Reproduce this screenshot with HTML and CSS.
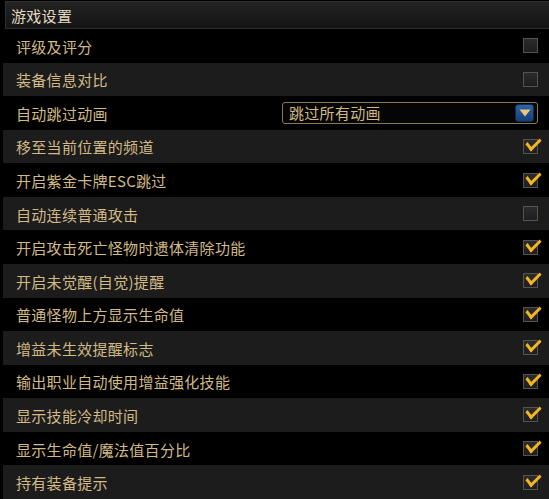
FILE: index.html
```html
<!DOCTYPE html>
<html lang="zh-CN">
<head>
<meta charset="utf-8">
<title>游戏设置</title>
<link rel="stylesheet" href="styles.css">
</head>
<body>
<div class="panel">
  <div class="header"><span class="title">游戏设置</span></div>
  <div class="list">
    <div class="row"><span class="label">评级及评分</span><span class="box"></span></div>
    <div class="row alt"><span class="label">装备信息对比</span><span class="box"></span></div>
    <div class="row"><span class="label">自动跳过动画</span>
      <div class="select"><span class="select-text">跳过所有动画</span><span class="select-btn"><svg width="12" height="8" viewBox="0 0 12 8"><path d="M0.5 0.5 H11.5 L6 7.5 Z" fill="#f2c679"/></svg></span></div>
    </div>
    <div class="row alt"><span class="label">移至当前位置的频道</span><span class="box on"></span></div>
    <div class="row"><span class="label">开启紫金卡牌ESC跳过</span><span class="box on"></span></div>
    <div class="row alt"><span class="label">自动连续普通攻击</span><span class="box"></span></div>
    <div class="row"><span class="label">开启攻击死亡怪物时遗体清除功能</span><span class="box on"></span></div>
    <div class="row alt"><span class="label">开启未觉醒(自觉)提醒</span><span class="box on"></span></div>
    <div class="row"><span class="label">普通怪物上方显示生命值</span><span class="box on"></span></div>
    <div class="row alt"><span class="label">增益未生效提醒标志</span><span class="box on"></span></div>
    <div class="row"><span class="label">输出职业自动使用增益强化技能</span><span class="box on"></span></div>
    <div class="row alt"><span class="label">显示技能冷却时间</span><span class="box on"></span></div>
    <div class="row"><span class="label">显示生命值/魔法值百分比</span><span class="box on"></span></div>
    <div class="row alt"><span class="label">持有装备提示</span><span class="box on"></span></div>
  </div>
</div>
</body>
</html>
```

FILE: styles.css
```css
html, body {
  margin: 0;
  padding: 0;
  background: #000;
}
.panel {
  width: 549px;
  height: 499px;
  overflow: hidden;
  font-family: "Noto Sans CJK SC", "Noto Sans", sans-serif;
  font-size: 15px;
  letter-spacing: 0.3px;
  color: #d2ba86;
  display: flex;
  flex-direction: column;
}
.header {
  margin: 1px 0 0 5px;
  height: 26px;
  border: 1px solid #2f2f2f;
  border-right: none;
  background: linear-gradient(#232323, #141414);
  display: flex;
  align-items: center;
  padding-left: 5px;
}
.title {
  color: #e3dac3;
  line-height: 1;
}
.list {
  display: flex;
  flex-direction: column;
}
.row {
  height: 33.57px;
  display: flex;
  align-items: center;
  justify-content: space-between;
  padding: 0 11px 0 16px;
  background: #000;
}
.row.alt {
  background: #1c1c1c;
  margin-left: 3px;
  padding-left: 13px;
}
.label {
  line-height: 1;
  padding-top: 1px;
}
.box {
  width: 13px;
  height: 13px;
  border: 1px solid #57524a;
  background: linear-gradient(#2b2b2e, #1e1e22);
  position: relative;
}
.box.on::after {
  content: "";
  position: absolute;
  left: 2px;
  top: -2px;
  width: 12px;
  height: 6px;
  border-left: 3px solid #f2b623;
  border-bottom: 3px solid #f2b623;
  transform: rotate(-45deg) skewX(-8deg);
  transform-origin: center;
}
.select {
  width: 245px;
  height: 20px;
  border: 1px solid #8a7650;
  border-radius: 3px;
  background: #050505;
  display: flex;
  align-items: center;
  justify-content: space-between;
  padding: 0 3px 0 6px;
}
.select-text {
  color: #d2ba86;
  line-height: 1;
}
.select-btn {
  width: 17px;
  height: 16px;
  border-radius: 3px;
  background: linear-gradient(#2a64a8, #173f75);
  border: 1px solid #0e2a52;
  display: flex;
  align-items: center;
  justify-content: center;
}
```
